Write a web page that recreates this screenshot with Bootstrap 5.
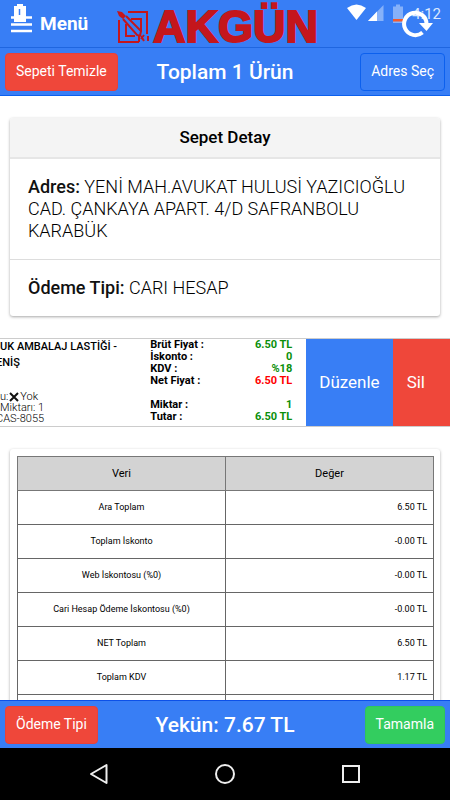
<!DOCTYPE html>
<html lang="tr">
<head>
<meta charset="utf-8">
<meta name="viewport" content="width=device-width, initial-scale=1">
<title>Sepet Detay</title>
<link href="https://cdn.jsdelivr.net/npm/bootstrap@5.3.0/dist/css/bootstrap.min.css" rel="stylesheet">
<style>
  body { font-family: Roboto, "Open Sans", sans-serif; color: #000; background: #fff; }
  .bar { background: #387ef5; color: #fff; min-height: 48px; padding: 0 5px; }
  .bar-top { border-bottom: 1px solid #1f66e0; }
  .bar-sub { border-bottom: 1px solid #0c60ee; }
  .bar-foot { border-top: 1px solid #0c50e8; }
  .bar-title { font-size: 21px; line-height: 24px; font-weight: 500; }
  .bar-btn { font-size: 14px; line-height: 20px; padding: 7px 10px 9px; border-radius: 4px; color: #fff; border: 1px solid transparent; }
  .danger-fill { background: #ef473a; }
  .bar-btn.danger-fill { border-color: #e8413a; }
  .bar-btn.ok-fill { background: #33cd5f; border-color: #30c65b; }
  .bar-btn.line-only { background: transparent; border-color: #0c60ee; }
  .menu-btn { font-size: 19px; line-height: 24px; font-weight: 700; color: #fff; }
  .logo { left: 117px; }
  .brand-word { font-family: "Liberation Sans", Arial, sans-serif; font-size: 45px; line-height: 54px; font-weight: 700; color: #c4161c; -webkit-text-stroke: 2px #c4161c; }
  .status { top: 4px; right: 9px; }
  .clock { font-size: 15px; line-height: 20px; color: #dce9ff; }
  .refresh { top: 8px; right: 17px; }
  .panel { border-radius: 3px; box-shadow: 0 1px 3px rgba(0,0,0,.35); background: #fff; margin: 0 10px; }
  .panel-head { background: #f4f4f4; border-bottom: 2px solid #e6e6e6; font-size: 17px; line-height: 23px; font-weight: 500; padding: 8px; border-radius: 3px 3px 0 0; }
  .panel-row { font-size: 18px; line-height: 22px; font-weight: 300; padding: 17px 18px; }
  .panel-row + .panel-row { border-top: 1px solid #ddd; }
  .panel-row b { font-weight: 500; color: #111; }
  .content { padding-top: 22px; gap: 22px; }
  .swipe { border-top: 1px solid #ccc; border-bottom: 1px solid #ccc; height: 89px; }
  .product { margin-left: -4px; font-size: 11px; line-height: 11px; font-weight: 300; white-space: nowrap; }
  .product-name { font-weight: 500; line-height: 16px; margin-bottom: 20px; }
  .prices { width: 142px; margin-right: 14px; font-size: 11px; line-height: 12px; }
  .prices dt, .prices dd { font-weight: 700; }
  .prices dd { color: #0a8f0a; }
  .prices dd.net { color: #f00; }
  .swipe-btn { font-size: 17px; color: #fff; background: #387ef5; border: 0; padding: 0 13px; }
  .swipe-btn.danger-fill { background: #ef473a; padding: 0 25px 0 14px; }
  .totals-panel { padding: 7px 6px 7px 7px; }
  .totals { font-size: 9px; line-height: 13px; border-collapse: collapse; }
  .totals th, .totals td { border: 1px solid #666; height: 34px; padding: 0 6px; width: 50%; text-align: center; font-weight: 400; }
  .totals thead th { background: #d3d3d3; font-size: 11px; border-color: #777; }
  .totals td { text-align: right; }
  .sysbar { background: #000; height: 52px; padding: 0 88px; }
</style>
<script src="https://cdn.jsdelivr.net/npm/bootstrap@5.3.0/dist/js/bootstrap.bundle.min.js"></script>
</head>
<body class="d-flex flex-column vh-100 overflow-hidden">
  <header>
    <div class="bar bar-top position-relative d-flex align-items-center">
      <button type="button" class="menu-btn btn p-0 border-0 d-flex align-items-center gap-2">
        <svg width="27" height="40" viewBox="5 4 27 40" aria-hidden="true">
          <path d="M11 17.500h22M11 24.500h22M11 31h22" stroke="#fff" stroke-width="2.500"/>
          <path d="M17 4h6v2h3v16H14V6h3z" fill="#fff"/>
          <path d="M19.500 9v6" stroke="#387ef5" stroke-width="1.500"/>
        </svg>
        <span>Menü</span>
      </button>
      <div class="logo d-flex align-items-center position-absolute top-0">
        <svg width="32" height="34" viewBox="0 0 32 34" aria-hidden="true">
          <g fill="none" stroke="#c4161c" stroke-width="2">
            <path d="M11 2H30V24M2 10V32H22"/>
            <path d="M14 9H24V22M9 14V26H18"/>
            <path d="M6 9L20 25L23 26M9 6L24 21L23 26"/>
            <path d="M22 25v7M27 25l-3 4M27 31l-3-5M31 26v5"/>
          </g>
          <path d="M0 1l5 1 4 4-3 3-4-3z" fill="#c4161c"/>
        </svg>
        <span class="brand-word ms-1">AKGÜN</span>
      </div>
      <div class="status position-absolute d-flex align-items-start">
        <svg width="66" height="20" viewBox="346 4 66 20" aria-hidden="true">
          <path d="M347 8Q356.500 1 366 8L356.500 20Z" fill="#fff"/>
          <path d="M383.500 5V21H368Z" fill="#86b1f9"/><path d="M377 11.500V21H368Z" fill="#fff"/>
          <path d="M396 4.500h4v2h3V23h-10V6.500h3z" fill="#86b1f9"/><path d="M393 19h10v2.500h-10z" fill="#f4592c"/>
        </svg>
        <span class="clock">4:12</span>
      </div>
      <button type="button" class="refresh btn border-0 p-0 d-flex position-absolute" aria-label="Yenile">
        <svg width="32" height="32" viewBox="401 8 32 32" aria-hidden="true">
          <path d="M422.500 32.500A11.200 11.200 0 1 1 426.500 24" fill="none" stroke="#fff" stroke-width="4"/>
          <path d="M419 23h14l-6.500 8z" fill="#fff"/>
        </svg>
      </button>
    </div>
    <div class="bar bar-sub position-relative d-flex align-items-center justify-content-between">
      <button type="button" class="bar-btn danger-fill">Sepeti Temizle</button>
      <h1 class="bar-title m-0 position-absolute top-50 start-50 translate-middle text-nowrap">Toplam 1 Ürün</h1>
      <button type="button" class="bar-btn line-only">Adres Seç</button>
    </div>
  </header>

  <main class="content d-flex flex-column flex-grow-1 overflow-hidden">
    <section class="panel flex-shrink-0">
      <h2 class="panel-head m-0 text-center">Sepet Detay</h2>
      <div class="panel-row"><b>Adres:</b> YENİ MAH.AVUKAT HULUSİ YAZICIOĞLU CAD. ÇANKAYA APART. 4/D SAFRANBOLU KARABÜK</div>
      <div class="panel-row"><b>Ödeme Tipi:</b> CARI HESAP</div>
    </section>

    <section class="swipe d-flex flex-shrink-0 overflow-hidden">
      <div class="product flex-grow-1">
        <div class="product-name"><div class="ps-1">UK AMBALAJ LASTİĞİ -</div><div>ENİŞ</div></div>
        <div class="ps-1 d-flex align-items-center"><span>u:</span><svg width="12" height="10" viewBox="-1 -1 12 10" aria-hidden="true"><path d="M1 0l8 8M9 0L1 8" stroke="#111" stroke-width="2"/></svg><span>Yok</span></div>
        <div class="ps-1">Miktarı: 1</div>
        <div>CAS-8055</div>
      </div>
      <dl class="prices mb-0 flex-shrink-0">
        <div class="d-flex justify-content-between"><dt>Brüt Fiyat :</dt><dd class="m-0">6.50 TL</dd></div>
        <div class="d-flex justify-content-between"><dt>İskonto :</dt><dd class="m-0">0</dd></div>
        <div class="d-flex justify-content-between"><dt>KDV :</dt><dd class="m-0">%18</dd></div>
        <div class="d-flex justify-content-between"><dt>Net Fiyat :</dt><dd class="net m-0">6.50 TL</dd></div>
        <div class="d-flex justify-content-between pt-2 mt-1"><dt>Miktar :</dt><dd class="m-0">1</dd></div>
        <div class="d-flex justify-content-between"><dt>Tutar :</dt><dd class="m-0">6.50 TL</dd></div>
      </dl>
      <button type="button" class="swipe-btn">Düzenle</button>
      <button type="button" class="swipe-btn danger-fill">Sil</button>
    </section>

    <section class="panel totals-panel flex-shrink-0">
      <table class="totals w-100">
        <thead><tr><th scope="col">Veri</th><th scope="col">Değer</th></tr></thead>
        <tbody>
          <tr><th scope="row">Ara Toplam</th><td>6.50 TL</td></tr>
          <tr><th scope="row">Toplam İskonto</th><td>-0.00 TL</td></tr>
          <tr><th scope="row">Web İskontosu (%0)</th><td>-0.00 TL</td></tr>
          <tr><th scope="row">Cari Hesap Ödeme İskontosu (%0)</th><td>-0.00 TL</td></tr>
          <tr><th scope="row">NET Toplam</th><td>6.50 TL</td></tr>
          <tr><th scope="row">Toplam KDV</th><td>1.17 TL</td></tr>
          <tr><th scope="row"></th><td></td></tr>
        </tbody>
      </table>
    </section>
  </main>

  <footer>
    <div class="bar bar-foot position-relative d-flex align-items-center justify-content-between">
      <button type="button" class="bar-btn danger-fill">Ödeme Tipi</button>
      <strong class="bar-title position-absolute top-50 start-50 translate-middle text-nowrap">Yekün: 7.67 TL</strong>
      <button type="button" class="bar-btn ok-fill">Tamamla</button>
    </div>
    <nav class="sysbar d-flex align-items-center justify-content-between" aria-label="Sistem">
      <button type="button" class="btn border-0 p-0 d-flex" aria-label="Geri"><svg width="22" height="22" viewBox="0 0 22 22"><path d="M18.500 2V20L3 11Z" fill="none" stroke="#eee" stroke-width="2" stroke-linejoin="round"/></svg></button>
      <button type="button" class="btn border-0 p-0 d-flex" aria-label="Ana ekran"><svg width="22" height="22" viewBox="0 0 22 22"><circle cx="11" cy="11" r="9" fill="none" stroke="#eee" stroke-width="2"/></svg></button>
      <button type="button" class="btn border-0 p-0 d-flex" aria-label="Son uygulamalar"><svg width="22" height="22" viewBox="0 0 22 22"><rect x="3" y="3" width="16" height="16" fill="none" stroke="#eee" stroke-width="2"/></svg></button>
    </nav>
  </footer>
</body>
</html>
